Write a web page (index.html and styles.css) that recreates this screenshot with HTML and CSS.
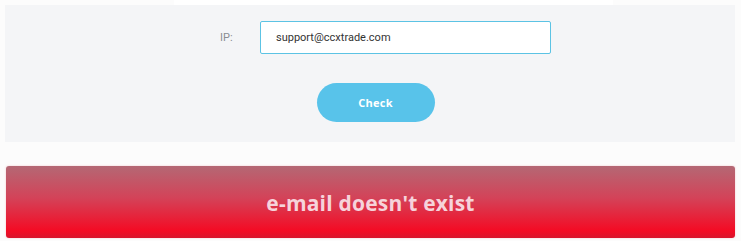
FILE: index.html
```html
<!DOCTYPE html>
<html lang="en">
<head>
<meta charset="utf-8">
<title>Check e-mail</title>
<link rel="stylesheet" href="styles.css">
</head>
<body>
<div class="page">
  <div class="topstrip"></div>
  <form class="panel">
    <div class="field">
      <label class="label" for="ip">IP:</label>
      <input class="input" id="ip" type="text" value="support@ccxtrade.com">
    </div>
    <button class="check" type="button">Check</button>
  </form>
  <div class="result">e-mail doesn't exist</div>
</div>
</body>
</html>
```
FILE: styles.css
```css
* { box-sizing: border-box; }
html, body { margin: 0; padding: 0; background: #fcfcfc; }
body { width: 741px; height: 241px; overflow: hidden; font-family: Roboto, "Liberation Sans", sans-serif; }
.page { position: relative; padding: 5px 6px 0 5px; }
.topstrip { position: absolute; top: 0; left: 174px; width: 439px; height: 5px; background: #ffffff; }
.panel {
  position: relative;
  background: #f4f5f7;
  height: 137px;
  padding-top: 16px;
  display: flex;
  flex-direction: column;
  align-items: center;
}
.field { display: flex; align-items: center; gap: 25px; margin-left: 31px; }
.label { width: 15px; font-size: 11px; color: #8a8d92; margin-top: -1px; }
.input {
  width: 291px; height: 33px;
  border: 1px solid #5cc3e4;
  border-radius: 2px;
  background: #fff;
  padding: 0 15px;
  font-family: Roboto, "Liberation Sans", sans-serif;
  font-size: 11px;
  color: #333;
  outline: none;
}
.check {
  margin-top: 29px;
  margin-left: 11px;
  width: 118px; height: 39px;
  border: none; border-radius: 20px;
  background: #58c3ea;
  color: #fff;
  font-family: "Open Sans", Lato, sans-serif;
  font-weight: 700;
  font-size: 11px;
  letter-spacing: 0.3px;
  padding-bottom: 2px;
}
.result {
  margin-top: 24px;
  margin-left: 1px;
  height: 72px;
  border-radius: 3px;
  background: linear-gradient(to bottom, #b46874 0%, #d44258 45%, #f40b24 90%, #d8142c 100%);
  box-shadow: 0 0 2px rgba(230, 80, 100, 0.35);
  color: #f6d3db;
  font-family: "Open Sans", Lato, sans-serif;
  font-weight: 700;
  font-size: 21px;
  letter-spacing: 0.2px;
  display: flex; align-items: center; justify-content: center;
  padding-top: 1px;
}
```
